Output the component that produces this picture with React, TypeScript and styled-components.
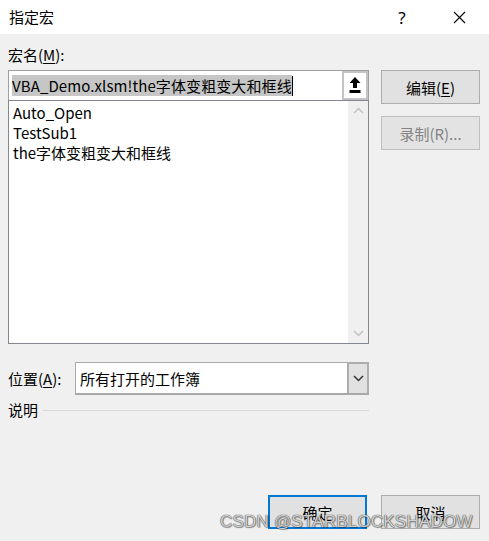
import React from "react";
import styled, { createGlobalStyle } from "styled-components";

const Global = createGlobalStyle`
  html, body { margin: 0; padding: 0; background: #f0f0f0; }
  body { font-family: "Noto Sans CJK SC", "Noto Sans", sans-serif; font-size: 15px; color: #000; }
  * { box-sizing: border-box; }
`;

const Window = styled.div`
  position: relative;
  width: 489px;
  height: 541px;
  background: #f0f0f0;
  display: flex;
  flex-direction: column;
  overflow: hidden;
`;

const TitleBar = styled.div`
  height: 34px;
  background: #fff;
  display: flex;
  align-items: center;
  padding: 0 7px 0 9px;
  gap: 11px;
  flex-shrink: 0;
`;

const Title = styled.div`
  flex: 1;
  font-size: 15px;
  line-height: 20px;
`;

const TitleButton = styled.div`
  width: 46px;
  height: 34px;
  display: flex;
  align-items: center;
  justify-content: center;
  font-family: "Noto Sans", sans-serif;
  font-size: 17px;
`;

const Body = styled.div`
  flex: 1;
  display: flex;
  flex-direction: column;
  padding: 10px 9px 0 8px;
`;

const Label = styled.div`
  font-size: 15px;
  line-height: 22px;
  height: 22px;
`;

const Under = styled.span`
  text-decoration: underline;
  text-underline-offset: 2px;
`;

const MainGrid = styled.div`
  margin-top: 4px;
  display: grid;
  grid-template-columns: 361px 99px;
  column-gap: 12px;
`;

const LeftCol = styled.div`
  display: flex;
  flex-direction: column;
`;

const NameBox = styled.div`
  height: 30px;
  display: flex;
  border: 1px solid #a0a0a0;
  border-bottom: none;
  background: #fff;
`;

const NameText = styled.div`
  flex: 1;
  display: flex;
  align-items: center;
  padding-left: 3px;
  white-space: nowrap;
  overflow: hidden;
`;

const Selected = styled.span`
  background: #c6c6c6;
  line-height: 21px;
  font-size: 15px;
  letter-spacing: 0.1px;
`;

const Caret = styled.span`
  display: inline-block;
  width: 1px;
  height: 20px;
  background: #000;
`;

const UploadFrame = styled.div`
  width: 26px;
  background: #c4c4c4;
  padding: 2px;
  display: flex;
`;

const UploadInner = styled.div`
  flex: 1;
  background: #fff;
  display: flex;
  align-items: center;
  justify-content: center;
`;

const ListBox = styled.div`
  height: 244px;
  display: flex;
  border: 1px solid #828790;
  background: #fff;
`;

const Items = styled.div`
  flex: 1;
  padding: 2px 0 0 4px;
`;

const Item = styled.div`
  font-size: 15px;
  line-height: 20px;
  height: 20px;
`;

const ScrollBar = styled.div`
  width: 20px;
  background: #f0f0f0;
  display: flex;
  flex-direction: column;
  justify-content: space-between;
  align-items: center;
  padding: 6px 0 6px;
`;

const RightCol = styled.div`
  display: flex;
  flex-direction: column;
  gap: 12px;
`;

const Button = styled.button<{ $disabled?: boolean; $default?: boolean }>`
  height: 34px;
  width: 99px;
  padding: 0;
  font-family: "Noto Sans CJK SC", "Noto Sans", sans-serif;
  font-size: 15px;
  background: ${(p) => (p.$disabled ? "#e3e3e3" : "#e1e1e1")};
  color: ${(p) => (p.$disabled ? "#838383" : "#000")};
  border: ${(p) =>
    p.$default ? "2px solid #0078d7" : p.$disabled ? "1px solid #bfbfbf" : "1px solid #adadad"};
  display: flex;
  align-items: center;
  justify-content: center;
`;

const PosRow = styled.div`
  margin-top: 18px;
  display: flex;
  align-items: center;
  width: 361px;
`;

const PosLabel = styled.div`
  width: 67px;
  font-size: 15px;
`;

const Select = styled.div`
  flex: 1;
  height: 33px;
  display: flex;
  border: 1px solid #a9a9a9;
  border-bottom-width: 2px;
  background: #fff;
`;

const SelectText = styled.div`
  flex: 1;
  display: flex;
  align-items: center;
  padding-left: 4px;
  font-size: 15px;
`;

const DropButton = styled.div`
  width: 22px;
  background: #e1e1e1;
  border: 2px solid #adadad;
  border-bottom: none;
  margin: -1px -1px 0 0;
  display: flex;
  align-items: center;
  justify-content: center;
`;

const DescRow = styled.div`
  margin-top: 4px;
  display: flex;
  align-items: center;
  width: 361px;
  gap: 5px;
`;

const DescLine = styled.div`
  flex: 1;
  height: 1px;
  background: #d9d9d9;
  margin-top: 1px;
`;

const Footer = styled.div`
  margin-top: 75px;
  display: flex;
  justify-content: flex-end;
  gap: 14px;
`;

const Watermark = styled.div`
  position: absolute;
  left: 220px;
  top: 512px;
  font-family: "Liberation Sans", Arial, sans-serif;
  font-size: 17px;
  letter-spacing: 0.2px;
  color: rgba(255, 255, 255, 0.75);
  text-shadow: 0 0 1px #444, 0 0 1px #444, 1px 1px 1px rgba(0,0,0,0.35);
  white-space: nowrap;
`;

const Chevron = ({ up, color }: { up?: boolean; color: string }) => (
  <svg width="11" height="7" viewBox="0 0 11 7">
    <path
      d={up ? "M1 6 L5.5 1.5 L10 6" : "M1 1 L5.5 5.5 L10 1"}
      fill="none"
      stroke={color}
      strokeWidth="1.5"
    />
  </svg>
);

export default function App() {
  return (
    <Window>
      <Global />
      <TitleBar>
        <Title>指定宏</Title>
        <TitleButton>?</TitleButton>
        <TitleButton>
          <svg width="13" height="13" viewBox="0 0 13 13">
            <path d="M1 1 L12 12 M12 1 L1 12" stroke="#000" strokeWidth="1.1" />
          </svg>
        </TitleButton>
      </TitleBar>
      <Body>
        <Label>
          宏名(<Under>M</Under>):
        </Label>
        <MainGrid>
          <LeftCol>
            <NameBox>
              <NameText>
                <Selected>VBA_Demo.xlsm!the字体变粗变大和框线</Selected>
                <Caret />
              </NameText>
              <UploadFrame>
                <UploadInner>
                  <svg width="12" height="17" viewBox="0 0 12 17">
                    <path d="M6 0 L11.5 6 L8 6 L8 11 L4 11 L4 6 L0.5 6 Z" fill="#000" />
                    <rect x="0.5" y="13" width="11" height="3" fill="#000" />
                  </svg>
                </UploadInner>
              </UploadFrame>
            </NameBox>
            <ListBox>
              <Items>
                <Item>Auto_Open</Item>
                <Item>TestSub1</Item>
                <Item>the字体变粗变大和框线</Item>
              </Items>
              <ScrollBar>
                <Chevron up color="#c2c2c2" />
                <Chevron color="#c2c2c2" />
              </ScrollBar>
            </ListBox>
          </LeftCol>
          <RightCol>
            <Button>
              编辑(<Under>E</Under>)
            </Button>
            <Button $disabled>录制(R)...</Button>
          </RightCol>
        </MainGrid>
        <PosRow>
          <PosLabel>
            位置(<Under>A</Under>):
          </PosLabel>
          <Select>
            <SelectText>所有打开的工作簿</SelectText>
            <DropButton>
              <Chevron color="#333" />
            </DropButton>
          </Select>
        </PosRow>
        <DescRow>
          <span>说明</span>
          <DescLine />
        </DescRow>
        <Footer>
          <Button $default>确定</Button>
          <Button>取消</Button>
        </Footer>
      </Body>
      <Watermark>CSDN @STARBLOCKSHADOW</Watermark>
    </Window>
  );
}
